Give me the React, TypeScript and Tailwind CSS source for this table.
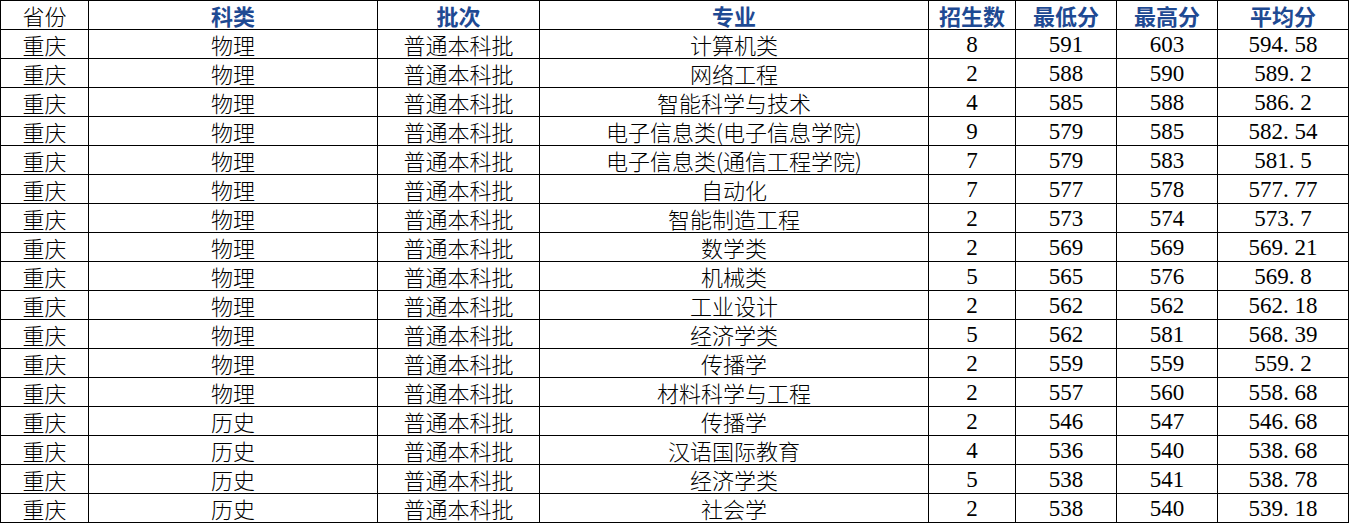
const HEADERS = ["省份", "科类", "批次", "专业", "招生数", "最低分", "最高分", "平均分"];

const COL_WIDTHS = ["w-[88px]", "w-[289px]", "w-[162px]", "w-[389px]", "w-[87px]", "w-[101px]", "w-[101px]", "w-[131px]"];

const ROWS: [string, string, string, string, string, string, string][] = [
  ["物理", "普通本科批", "计算机类", "8", "591", "603", "594.58"],
  ["物理", "普通本科批", "网络工程", "2", "588", "590", "589.2"],
  ["物理", "普通本科批", "智能科学与技术", "4", "585", "588", "586.2"],
  ["物理", "普通本科批", "电子信息类(电子信息学院)", "9", "579", "585", "582.54"],
  ["物理", "普通本科批", "电子信息类(通信工程学院)", "7", "579", "583", "581.5"],
  ["物理", "普通本科批", "自动化", "7", "577", "578", "577.77"],
  ["物理", "普通本科批", "智能制造工程", "2", "573", "574", "573.7"],
  ["物理", "普通本科批", "数学类", "2", "569", "569", "569.21"],
  ["物理", "普通本科批", "机械类", "5", "565", "576", "569.8"],
  ["物理", "普通本科批", "工业设计", "2", "562", "562", "562.18"],
  ["物理", "普通本科批", "经济学类", "5", "562", "581", "568.39"],
  ["物理", "普通本科批", "传播学", "2", "559", "559", "559.2"],
  ["物理", "普通本科批", "材料科学与工程", "2", "557", "560", "558.68"],
  ["历史", "普通本科批", "传播学", "2", "546", "547", "546.68"],
  ["历史", "普通本科批", "汉语国际教育", "4", "536", "540", "538.68"],
  ["历史", "普通本科批", "经济学类", "5", "538", "541", "538.78"],
  ["历史", "普通本科批", "社会学", "2", "538", "540", "539.18"],
];

const cjk = "font-['Noto_Sans_CJK_SC',sans-serif]";
const num = "font-['Liberation_Serif','Noto_Sans_CJK_SC',serif]";

// SimSun-style half-width dot: give the decimal point a full digit cell
function Score({ value }: { value: string }) {
  const [a, b] = value.split(".");
  if (b === undefined) return <>{value}</>;
  return (
    <>
      {a}
      <span className="inline-block w-[0.5em] text-left">.</span>
      {b}
    </>
  );
}

export default function App() {
  return (
    <div className="bg-white">
      <table className="table-fixed border-collapse text-black">
        <colgroup>
          {COL_WIDTHS.map((w, i) => (
            <col key={i} className={w} />
          ))}
        </colgroup>
        <thead>
          <tr className="h-[29px]">
            {HEADERS.map((h, i) => (
              <th
                key={h}
                className={`border border-black p-0 text-center text-[22px] leading-none ${cjk} ${
                  i === 0 ? "font-light text-black" : "font-bold text-[#1f4a93]"
                }`}
              >
                {h}
              </th>
            ))}
          </tr>
        </thead>
        <tbody>
          {ROWS.map((row, r) => (
            <tr key={r} className="h-[29px]">
              <td className={`border border-black p-0 text-center text-[22px] font-light leading-none ${cjk}`}>重庆</td>
              {row.map((cell, c) => (
                <td
                  key={c}
                  className={`border border-black p-0 text-center leading-none whitespace-nowrap ${
                    c >= 3 ? `${num} text-[23px]` : `${cjk} text-[22px] font-light`
                  }`}
                >
                  {c >= 3 ? <Score value={cell} /> : cell}
                </td>
              ))}
            </tr>
          ))}
        </tbody>
      </table>
    </div>
  );
}
